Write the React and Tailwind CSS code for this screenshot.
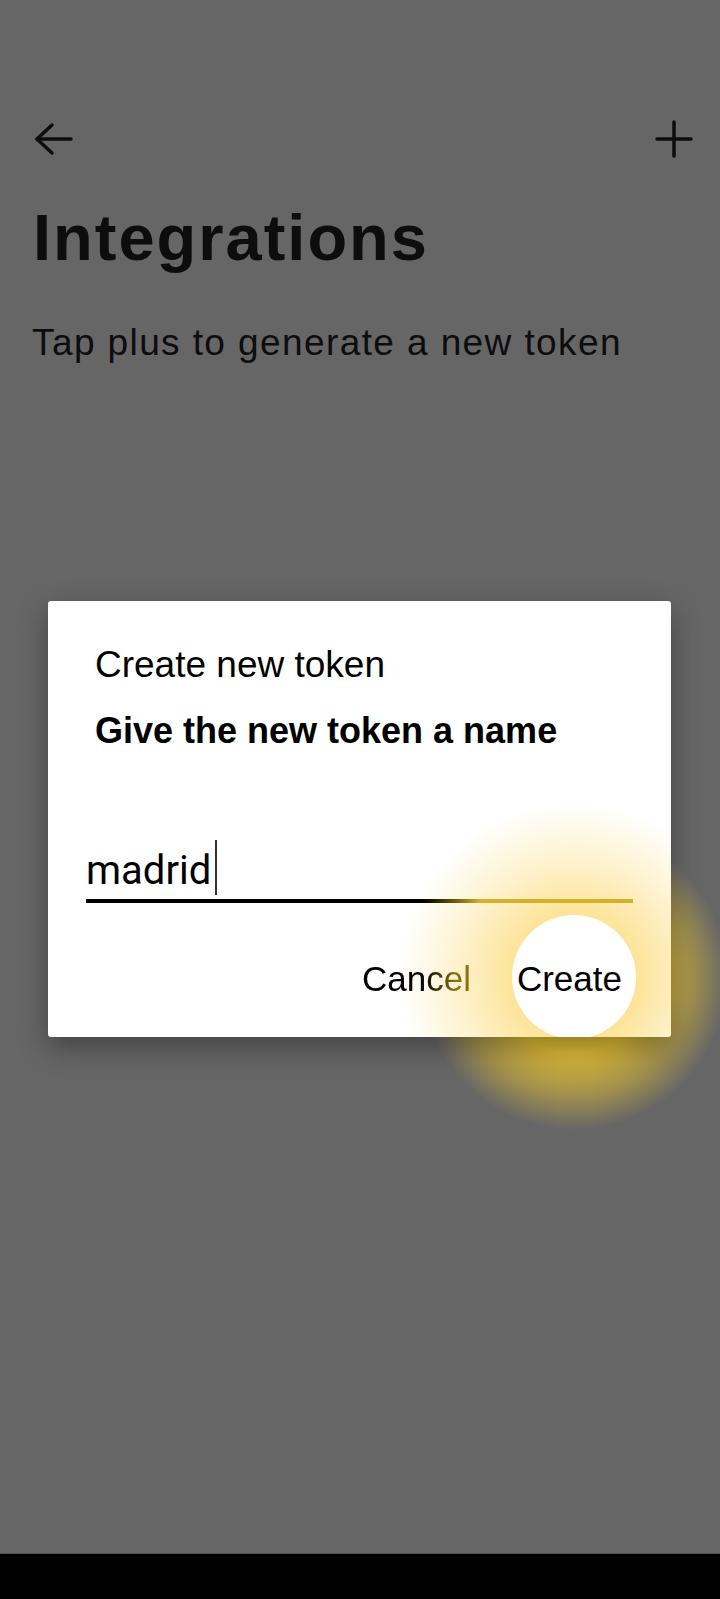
export default function App() {
  return (
    <div className="relative w-[720px] h-[1599px] bg-[#666666] overflow-hidden flex flex-col font-['Liberation_Sans',Arial,sans-serif] text-[#0d0d0d]">
      {/* Header */}
      <div className="mt-[119px] h-[40px] flex items-center justify-between pl-[34px] pr-[26px]">
        <svg width="40" height="34" viewBox="0 0 40 34" fill="none" stroke="#0d0d0d" strokeWidth="3.5" strokeLinecap="round" strokeLinejoin="round">
          <path d="M37 17H3" />
          <path d="M18 3 3 17l15 14" />
        </svg>
        <svg width="40" height="40" viewBox="0 0 40 40" fill="none" stroke="#0d0d0d" strokeWidth="3.5" strokeLinecap="round">
          <path d="M20 3v34" />
          <path d="M3 20h34" />
        </svg>
      </div>

      <h1 className="mt-[46px] pl-[33px] text-[65px] leading-none font-bold tracking-[2px]">Integrations</h1>
      <p className="mt-[54px] pl-[32px] text-[37px] leading-none tracking-[1.4px]">Tap plus to generate a new token</p>

      {/* Glow behind the dialog */}
      <div className="absolute left-[394px] top-[797px] w-[360px] h-[360px] rounded-full bg-[radial-gradient(circle_closest-side,rgba(238,198,44,0.85)_42%,rgba(238,198,44,0.45)_65%,rgba(238,198,44,0)_85%)]" />

      {/* Dialog */}
      <div className="relative z-10 mt-[240px] ml-[48px] w-[623px] h-[436px] bg-white rounded-[3px] overflow-hidden shadow-[0_10px_28px_rgba(0,0,0,0.35)]">
        <div className="absolute left-[351px] top-[201px] w-[350px] h-[350px] rounded-full bg-[radial-gradient(circle_closest-side,rgba(252,210,85,0.6)_36%,rgba(252,210,85,0.3)_65%,rgba(252,210,85,0)_100%)]" />
        <div className="absolute left-[464px] top-[314px] w-[124px] h-[124px] rounded-full bg-white" />

        <div className="relative flex flex-col h-full">
          <div className="pt-[45px] pl-[47px] text-[37px] leading-none text-black">Create new token</div>
          <div className="mt-[30px] pl-[47px] text-[36px] leading-none font-bold text-black">Give the new token a name</div>

          <div className="mt-[102px] mx-[38px]">
            <div className="h-[40px] flex items-center">
              <span className="font-['Roboto',sans-serif] text-[40px] leading-none text-black">madrid</span>
              <span className="ml-[4px] mt-[-7px] w-[1.5px] h-[55px] bg-[#333]" />
            </div>
            <div className="mt-[8px] h-[4px] bg-linear-to-r from-black from-60% to-[#d4b12a] to-72%" />
          </div>

          <div className="mt-[58px] flex justify-end gap-[46px] pr-[49px] text-[35px] leading-none">
            <span className="bg-linear-to-r from-black from-50% to-[#8a7314] to-85% bg-clip-text text-transparent">Cancel</span>
            <span className="text-black">Create</span>
          </div>
        </div>
      </div>

      <div className="flex-1" />
      <div className="h-[46px] bg-black border-t border-[#555]" />
    </div>
  );
}
